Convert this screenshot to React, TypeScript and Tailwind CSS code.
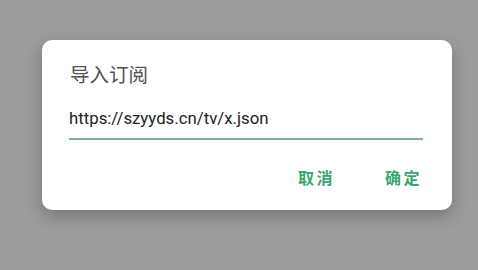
export default function App() {
  return (
    <div
      className="w-[478px] h-[270px] bg-[#9c9c9c] pt-[40px] pl-[42px]"
      style={{ fontFamily: 'Roboto, "Noto Sans CJK SC", sans-serif' }}
    >
      <div className="w-[410px] h-[170px] bg-white rounded-[10px] shadow-[0_6px_16px_rgba(0,0,0,0.25)] pl-[27px] pr-[29px] pt-[24px] flex flex-col">
        <h2 className="ml-[1px] text-[19.5px] leading-[24px] text-[#505050]">导入订阅</h2>
        <div className="mt-[19px] border-b-2 border-[#7fb096] pb-[9px]">
          <p className="text-[16.8px] leading-[22px] text-[#222]">https://szyyds.cn/tv/x.json</p>
        </div>
        <div className="flex justify-end gap-[50px] mt-[29px] mr-[1px]">
          <button className="text-[16px] leading-[20px] font-bold tracking-[2.5px] text-[#3aa56d]">取消</button>
          <button className="text-[16px] leading-[20px] font-bold tracking-[2.5px] text-[#3aa56d]">确定</button>
        </div>
      </div>
    </div>
  );
}
